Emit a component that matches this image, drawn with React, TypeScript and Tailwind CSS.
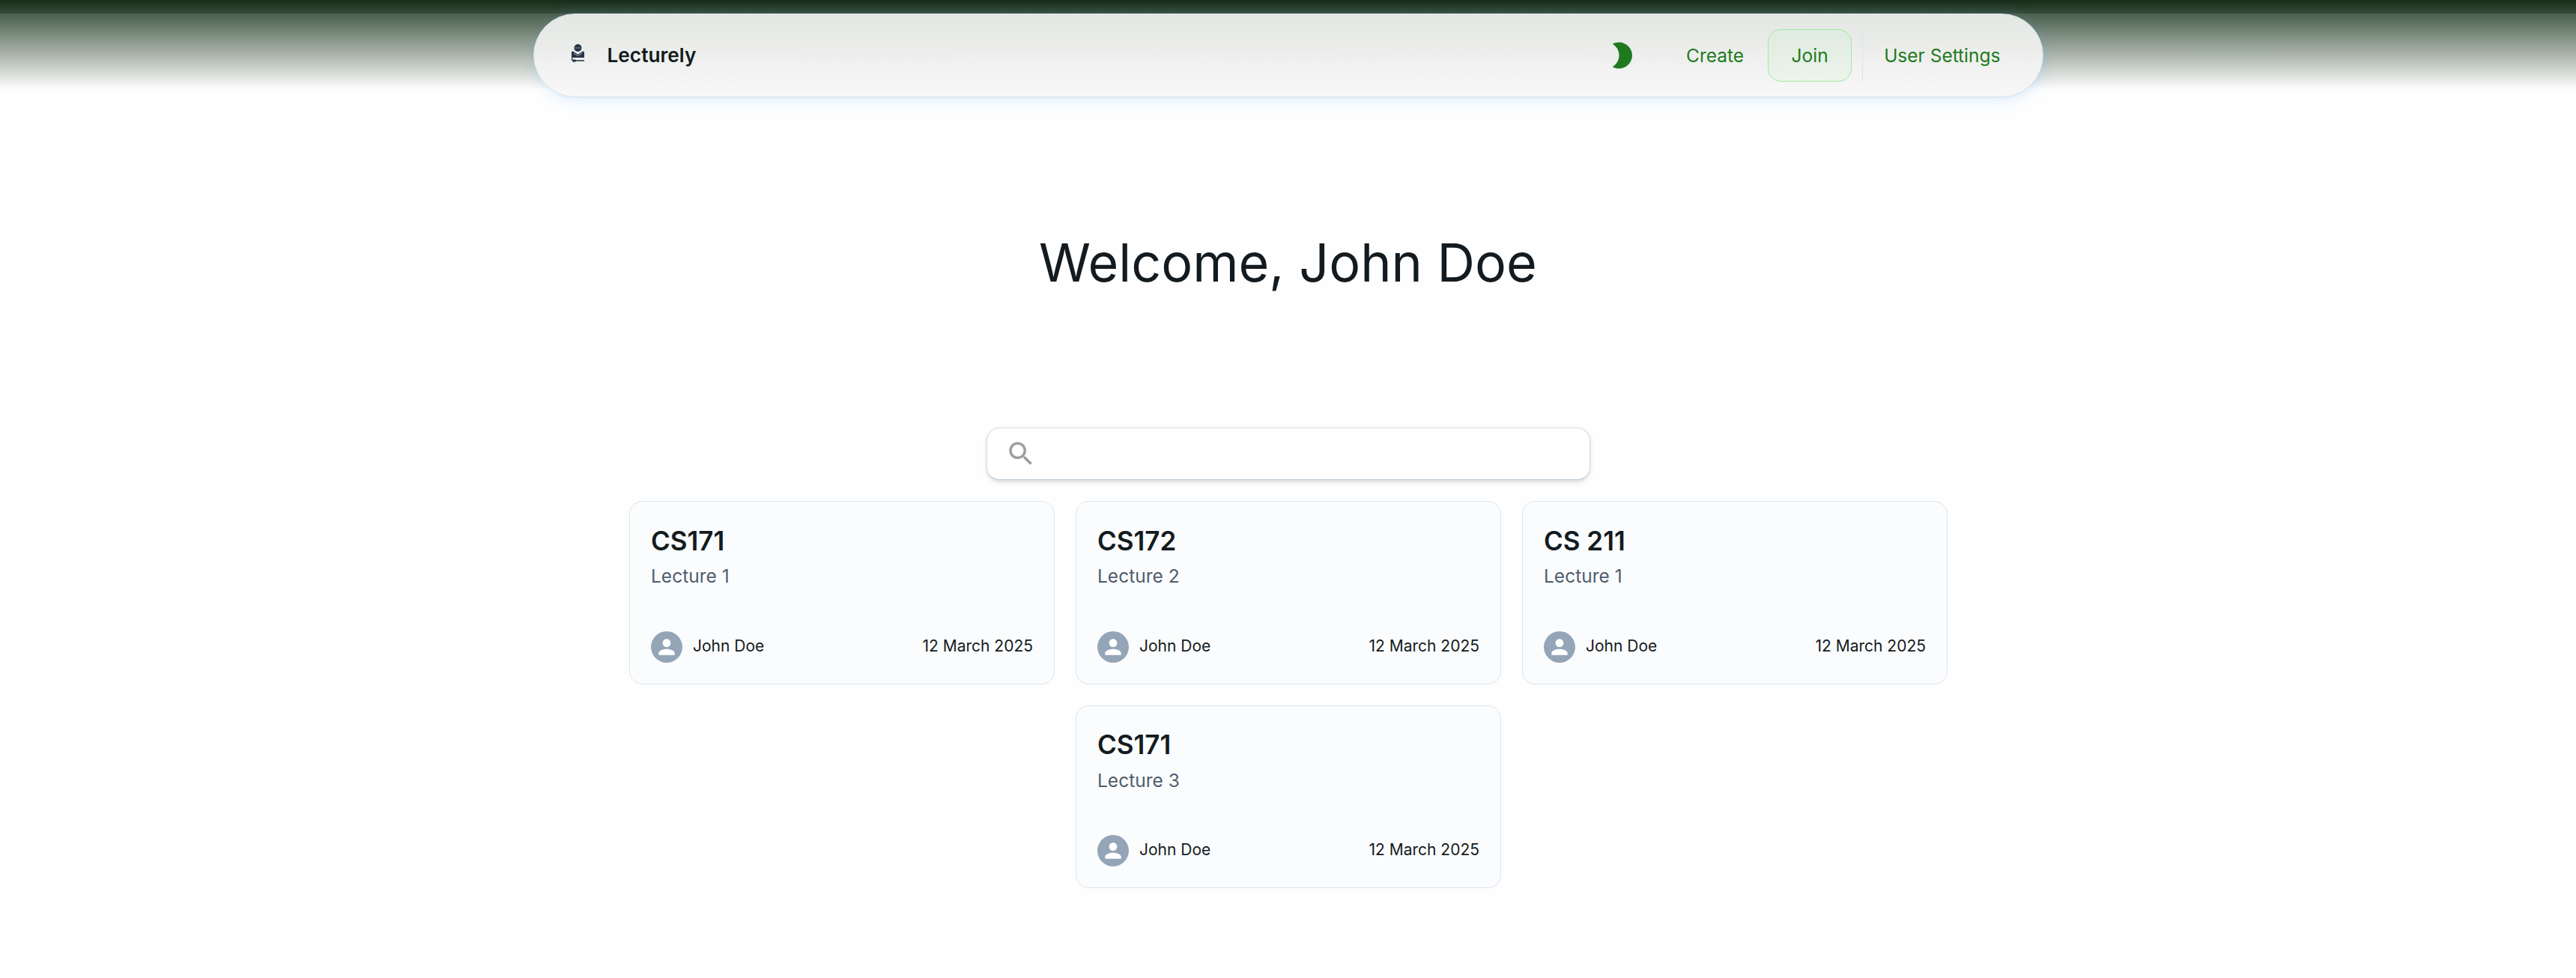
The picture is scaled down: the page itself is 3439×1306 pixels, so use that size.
const lectures = [
  { course: "CS171", title: "Lecture 1" },
  { course: "CS172", title: "Lecture 2" },
  { course: "CS 211", title: "Lecture 1" },
  { course: "CS171", title: "Lecture 3" },
];

function Logo() {
  return (
    <svg viewBox="0 0 34 50" className="mb-[5px] h-[25px] w-[17px]" fill="#273444">
      <circle cx="17" cy="10" r="10" />
      <path d="M0 20 L5 19 L17 27 L29 19 L34 20 V36 H3 Q0 36 0 39Z" />
      <path d="M4 18 L17 26.500 L30 18" fill="none" stroke="#ebedeb" strokeWidth="1.6" />
      <path d="M5 23.500 L17 31 L29 23.500" fill="none" stroke="#ebedeb" strokeWidth="1.2" />
      <path d="M1.500 37 Q0 43 4 44 H34" fill="none" stroke="#273444" strokeWidth="3" />
      <path d="M4 41h7v7l-3-1.500L4 49Z" />
      <g fill="#c4cacb">
        <circle cx="12" cy="10" r="1.4" />
        <circle cx="17" cy="10" r="1.4" />
        <circle cx="22" cy="10" r="1.4" />
      </g>
    </svg>
  );
}

function Moon() {
  return (
    <svg viewBox="0 0 24 24" className="size-[42px]" fill="#1f7a1f">
      <path d="M10 2c-1.820 0-3.530.5-5 1.350C7.990 5.080 10 8.300 10 12s-2.010 6.920-5 8.650C6.470 21.500 8.180 22 10 22c5.520 0 10-4.480 10-10S15.520 2 10 2z" />
    </svg>
  );
}

function NavBar() {
  return (
    <header className="flex justify-center pt-[18px] pl-px">
      <nav className="flex h-28 w-[2016px] items-center rounded-full border border-[#d3dfe8] bg-[linear-gradient(#e5e7e4,#e8eae7_25%,#f0f1f0_62%,#f8f8f8)] pr-[28.5px] pl-[50px] shadow-[0_0_2px_rgba(85,166,246,0.1),2px_3px_21px_-3.500px_rgba(85,166,246,0.3)]">
        <Logo />
        <span className="ml-[30.5px] text-[26.25px] leading-none font-semibold text-[#131b20]">Lecturely</span>
        <div className="ml-auto flex h-[70px] items-center text-[24.5px] text-[#1f7a1f]">
          <Moon />
          <span className="ml-[65.5px] pt-px">Create</span>
          <span className="ml-[32px] flex h-full w-[112px] items-center justify-center rounded-[17.5px] border border-[#a1e8a1] bg-[#c7f7c7]/20 pt-px">
            Join
          </span>
          <span className="ml-[14px] h-full w-px bg-[#dae5ed]" />
          <span className="mr-[28px] ml-[28px] pt-px">User Settings</span>
        </div>
      </nav>
    </header>
  );
}

function LectureCard({ course, title }: { course: string; title: string }) {
  return (
    <article className="flex h-[244.5px] w-[568px] flex-col rounded-[17.5px] border border-[#dae5ed] bg-[#fbfcfe] px-7 text-[#131b20]">
      <h2 className="mt-[29.5px] text-[35px] leading-[44px] font-semibold">{course}</h2>
      <p className="mt-[7.5px] text-[24.5px] leading-[37px] text-[#4f5d6c]">{title}</p>
      <div className="mt-auto mb-[28px] flex items-center text-[21px]">
        <span className="flex size-[42px] items-center justify-center rounded-full bg-[#94a5b8]">
          <svg viewBox="0 0 24 24" className="size-8" fill="#fff">
            <path d="M12 12c2.210 0 4-1.790 4-4s-1.790-4-4-4-4 1.790-4 4 1.790 4 4 4zm0 2c-2.670 0-8 1.340-8 4v2h16v-2c0-2.660-5.330-4-8-4z" />
          </svg>
        </span>
        <span className="ml-[14px] pb-[1.6px]">John Doe</span>
        <span className="ml-auto pb-[1.6px]">12 March 2025</span>
      </div>
    </article>
  );
}

function SearchBox() {
  return (
    <div className="mt-[168px] flex justify-center pl-px">
      <div className="flex h-[70px] w-[806px] items-center rounded-[17.5px] border border-[#d0dde7] border-b-[#bccad6] bg-white pl-[24px] shadow-[0_2px_3.5px_rgba(21,21,21,0.08),0_3.5px_7px_rgba(21,21,21,0.08)]">
        <svg viewBox="0 0 24 24" className="size-[42px]" fill="#9e9e9e">
          <path d="M15.500 14h-.79l-.28-.27C15.410 12.590 16 11.110 16 9.500 16 5.910 13.090 3 9.500 3S3 5.910 3 9.500 5.910 16 9.500 16c1.610 0 3.090-.59 4.230-1.570l.27.28v.79l5 4.990L20.490 19l-4.990-5zm-6 0C7.010 14 5 11.990 5 9.500S7.010 5 9.500 5 14 7.010 14 9.500 11.990 14 9.500 14z" />
        </svg>
      </div>
    </div>
  );
}

export default function App() {
  return (
    <div className="flow-root min-h-[1306px] bg-[#fefefe] bg-[linear-gradient(#162c17_0px,#374b39_18px,#4a5f4b_18px,#fefefe_120px)] bg-no-repeat font-['Inter',sans-serif]">
      <NavBar />
      <h1 className="mt-[168px] text-center text-[70px] leading-[105px] text-[#131b20]">Welcome, John Doe</h1>
      <SearchBox />
      <main className="mx-auto mt-[28px] flex w-[1761px] flex-wrap justify-center gap-7 pl-px">
        {lectures.map((l) => (
          <LectureCard key={l.course + l.title} {...l} />
        ))}
      </main>
    </div>
  );
}
